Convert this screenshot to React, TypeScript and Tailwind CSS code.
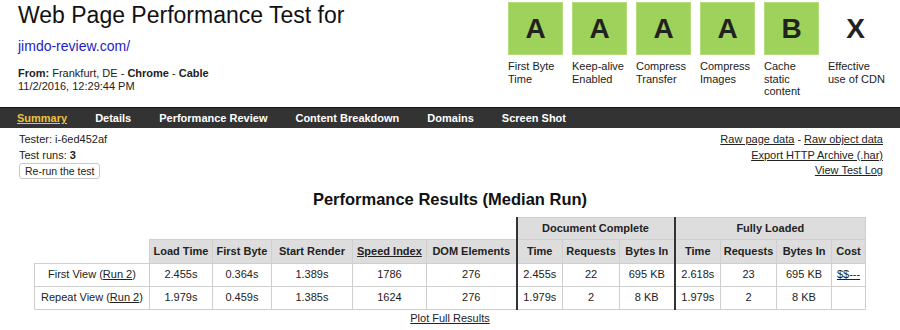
export default function App() {
  const grades = [
    { g: "A", label: ["First Byte", "Time"], box: true },
    { g: "A", label: ["Keep-alive", "Enabled"], box: true },
    { g: "A", label: ["Compress", "Transfer"], box: true },
    { g: "A", label: ["Compress", "Images"], box: true },
    { g: "B", label: ["Cache", "static", "content"], box: true },
    { g: "X", label: ["Effective", "use of CDN"], box: false },
  ];
  const nav = ["Summary", "Details", "Performance Review", "Content Breakdown", "Domains", "Screen Shot"];
  const th = "bg-[#dddddd] border border-[#cfcfcf] font-bold text-center p-0 align-middle";
  const td = "border border-[#cfcfcf] text-center p-0 align-middle font-normal";
  const thick = "border-l-2 border-l-[#333333]";
  return (
    <div className="w-[900px] h-[330px] bg-white text-[#222] font-['Liberation_Sans',Arial,sans-serif] overflow-hidden">
      {/* Header */}
      <div className="flex h-[107px]">
        <div className="flex-1 pl-[18px]">
          <div className="text-[23px] leading-[28px] text-[#111] pt-[1px]">Web Page Performance Test for</div>
          <div className="mt-[8px] text-[14px] leading-[18px]">
            <a className="text-[#1c1cc4]">jimdo-review.com/</a>
          </div>
          <div className="mt-[12px] text-[11px] leading-[13px]">
            <span className="font-bold">From:</span> Frankfurt, DE - <span className="font-bold">Chrome</span> -{" "}
            <span className="font-bold">Cable</span>
          </div>
          <div className="text-[11px] leading-[13px]">11/2/2016, 12:29:44 PM</div>
        </div>
        <div className="flex gap-[9px] pr-[17px] pt-[2px]">
          {grades.map((g, i) => (
            <div key={i} className="w-[55px] flex flex-col">
              <div
                className={
                  "h-[53px] w-[55px] flex items-center justify-center text-[28px] font-bold text-[#222] " +
                  (g.box ? "bg-[#9fd25a] border border-[#b3dd7f]" : "")
                }
              >
                {g.g}
              </div>
              <div className="mt-[5px] text-[11px] leading-[12.5px] text-[#222] whitespace-nowrap">
                {g.label.map((l, j) => (
                  <div key={j}>{l}</div>
                ))}
              </div>
            </div>
          ))}
        </div>
      </div>
      {/* Nav */}
      <div className="h-[21px] bg-[#333333] border-t border-[#151515] flex items-center pl-[3px]">
        {nav.map((n, i) => (
          <span
            key={i}
            className={
              "px-[14px] text-[11px] font-bold leading-[20px] " +
              (i === 0 ? "text-[#e9c53a] underline" : "text-white")
            }
          >
            {n}
          </span>
        ))}
      </div>
      {/* Info */}
      <div className="flex justify-between pt-[4px] pl-[19px] pr-[17px] text-[11px] leading-[15.5px]">
        <div>
          <div>Tester: i-6ed452af</div>
          <div>
            Test runs: <span className="font-bold">3</span>
          </div>
          <button className="h-[16px] px-[5px] border border-[#c8c8c8] rounded-[3px] bg-white text-[10.5px] leading-[14px] text-[#222]">
            Re-run the test
          </button>
        </div>
        <div className="text-right">
          <div>
            <a className="underline">Raw page data</a> - <a className="underline">Raw object data</a>
          </div>
          <div>
            <a className="underline">Export HTTP Archive (.har)</a>
          </div>
          <div>
            <a className="underline">View Test Log</a>
          </div>
        </div>
      </div>
      {/* Heading */}
      <div className="mt-[9px] text-center text-[16.5px] leading-[20px] font-bold text-[#111]">
        Performance Results (Median Run)
      </div>
      {/* Table */}
      <table className="mx-auto mt-[8px] border-collapse table-fixed w-[831px] text-[11px] text-[#222]">
        <colgroup>
          <col className="w-[115px]" />
          <col className="w-[63px]" />
          <col className="w-[59px]" />
          <col className="w-[81px]" />
          <col className="w-[74px]" />
          <col className="w-[90px]" />
          <col className="w-[46px]" />
          <col className="w-[57px]" />
          <col className="w-[55px]" />
          <col className="w-[46px]" />
          <col className="w-[56px]" />
          <col className="w-[55px]" />
          <col className="w-[34px]" />
        </colgroup>
        <thead>
          <tr className="h-[22px]">
            <td colSpan={6} className="p-0"></td>
            <th colSpan={3} className={th + " " + thick}>
              Document Complete
            </th>
            <th colSpan={4} className={th + " " + thick}>
              Fully Loaded
            </th>
          </tr>
          <tr className="h-[24px]">
            <td className="p-0"></td>
            <th className={th}>Load Time</th>
            <th className={th}>First Byte</th>
            <th className={th}>Start Render</th>
            <th className={th}>
              <span className="underline">Speed Index</span>
            </th>
            <th className={th}>DOM Elements</th>
            <th className={th + " " + thick}>Time</th>
            <th className={th}>Requests</th>
            <th className={th}>Bytes In</th>
            <th className={th + " " + thick}>Time</th>
            <th className={th}>Requests</th>
            <th className={th}>Bytes In</th>
            <th className={th}>Cost</th>
          </tr>
        </thead>
        <tbody>
          <tr className="h-[23px]">
            <td className={td}>
              First View (<span className="underline">Run 2</span>)
            </td>
            <td className={td}>2.455s</td>
            <td className={td}>0.364s</td>
            <td className={td}>1.389s</td>
            <td className={td}>1786</td>
            <td className={td}>276</td>
            <td className={td + " " + thick}>2.455s</td>
            <td className={td}>22</td>
            <td className={td}>695 KB</td>
            <td className={td + " " + thick}>2.618s</td>
            <td className={td}>23</td>
            <td className={td}>695 KB</td>
            <td className={td}>
              <span className="underline">$$---</span>
            </td>
          </tr>
          <tr className="h-[23px]">
            <td className={td}>
              Repeat View (<span className="underline">Run 2</span>)
            </td>
            <td className={td}>1.979s</td>
            <td className={td}>0.459s</td>
            <td className={td}>1.385s</td>
            <td className={td}>1624</td>
            <td className={td}>276</td>
            <td className={td + " " + thick}>1.979s</td>
            <td className={td}>2</td>
            <td className={td}>8 KB</td>
            <td className={td + " " + thick}>1.979s</td>
            <td className={td}>2</td>
            <td className={td}>8 KB</td>
            <td className={td}></td>
          </tr>
        </tbody>
      </table>
      <div className="text-center text-[11px] leading-[14px] mt-[1px]">
        <a className="underline">Plot Full Results</a>
      </div>
    </div>
  );
}
